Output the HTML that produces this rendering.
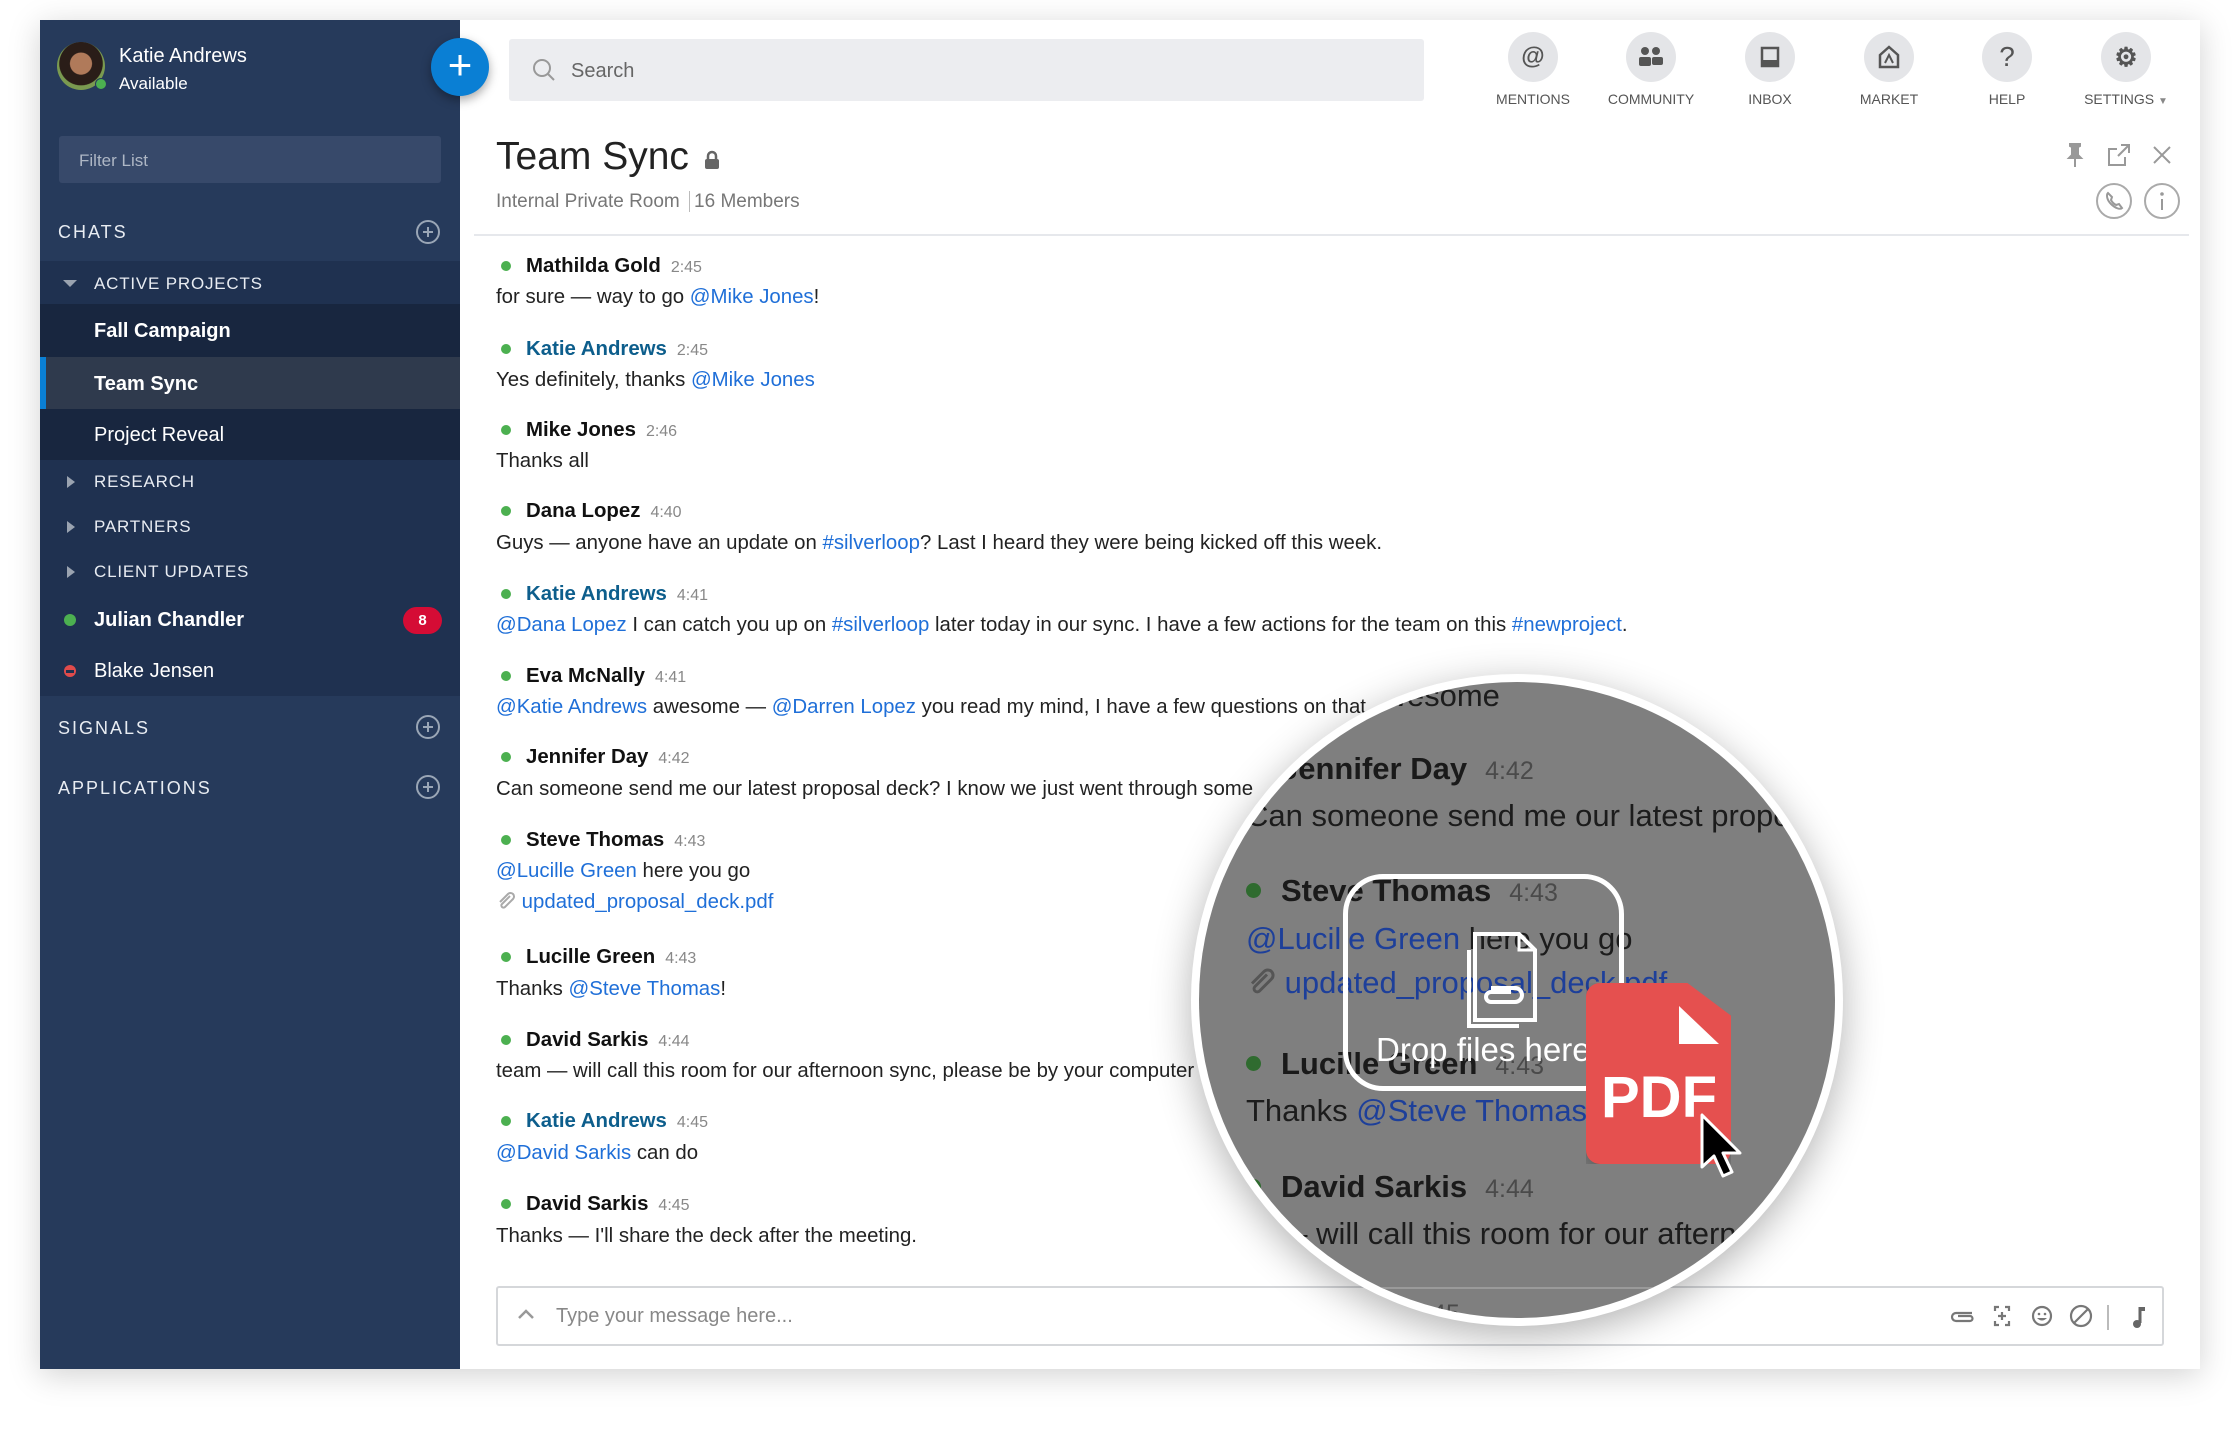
<!DOCTYPE html>
<html><head><meta charset="utf-8"><style>
*{margin:0;padding:0;box-sizing:border-box}
body{width:2240px;height:1430px;background:#fff;font-family:"Liberation Sans",sans-serif;position:relative;overflow:hidden}
.abs{position:absolute}
#frame{left:40px;top:20px;width:2160px;height:1349px;background:#fff;box-shadow:0 6px 30px rgba(0,0,0,.18)}
#side{left:40px;top:20px;width:420px;height:1349px;background:#263a5b}
.sb{color:#fff;white-space:nowrap}
.cap{font-size:18px;letter-spacing:2px;color:#e8ecf2}
.sub{font-size:17px;letter-spacing:.8px;color:#e8ecf2}
.item{font-size:20px;color:#fff}
.tri{width:0;height:0;border-top:6px solid transparent;border-bottom:6px solid transparent;border-left:8px solid #9aa3b0}
.plusc{width:24px;height:24px;border:2px solid #9aa6b6;border-radius:50%;}
.plusc:before{content:"";position:absolute;left:5px;top:9px;width:10px;height:2px;background:#9aa6b6}
.plusc:after{content:"";position:absolute;left:9px;top:5px;width:2px;height:10px;background:#9aa6b6}
.nav{width:50px;height:50px;border-radius:50%;background:#e4e5e8;display:flex;align-items:center;justify-content:center;color:#555;font-weight:bold;font-size:24px}
.navl{font-size:14px;color:#555;width:140px;text-align:center}
.m{left:496px;font-size:20.4px;color:#222;white-space:nowrap;line-height:31px}
.n{font-weight:bold;color:#111}
.n.k{color:#0d5e8c}
.t{font-size:16px;color:#888;font-weight:normal;margin-left:10px}
.dot{display:inline-block;width:10px;height:10px;border-radius:50%;background:#4cb050;margin:0 15px 2px 5px;vertical-align:middle}
.a{color:#1f6fd8}
.mg{left:0;font-size:31px;color:#1c1c1c;white-space:nowrap;line-height:40px}
.mg .a{color:#1d3f9a}
.mg .n{color:#1a1a1a}
.mg .t{font-size:25px;color:#4a4a4a;margin-left:18px}
.mg .dot{width:15px;height:15px;background:#2f6b2f;margin:0 20px 4px 0}
</style></head><body>
<div id="frame" class="abs"></div>
<div id="side" class="abs"></div>

<div class="abs" style="left:57px;top:42px;width:48px;height:48px;border-radius:50%;background:radial-gradient(circle at 50% 45%,#b07a5a 0 30%,#2a1d18 32% 60%,#7a9a50 62%)"></div>
<div class="abs" style="left:95px;top:78px;width:12px;height:12px;border-radius:50%;background:#4cb050;border:1px solid #263a5b"></div>
<div class="abs sb" style="left:119px;top:45px;font-size:20px">Katie Andrews</div>
<div class="abs sb" style="left:119px;top:74px;font-size:17px">Available</div>
<div class="abs" style="left:431px;top:38px;width:58px;height:58px;border-radius:50%;background:#0a7fd4;box-shadow:0 4px 10px rgba(0,0,0,.35);color:#fff;font-size:42px;line-height:54px;text-align:center">+</div>

<div class="abs" style="left:59px;top:136px;width:382px;height:47px;background:#37496a;border-radius:3px"></div>
<div class="abs sb" style="left:79px;top:151px;font-size:17px;color:#aeb7c5">Filter List</div>

<div class="abs sb cap" style="left:58px;top:222px">CHATS</div>
<div class="abs plusc" style="left:416px;top:220px"></div>

<div class="abs" style="left:40px;top:261px;width:420px;height:43px;background:#1f3150"></div>
<div class="abs" style="left:63px;top:280px;width:0;height:0;border-left:7px solid transparent;border-right:7px solid transparent;border-top:7px solid #9aa3b0"></div>
<div class="abs sb sub" style="left:94px;top:274px">ACTIVE PROJECTS</div>
<div class="abs" style="left:40px;top:304px;width:420px;height:53px;background:#18263f"></div>
<div class="abs sb item" style="left:94px;top:320px;font-weight:bold">Fall Campaign</div>
<div class="abs" style="left:40px;top:357px;width:420px;height:52px;background:#2f3a4d"></div>
<div class="abs" style="left:40px;top:357px;width:6px;height:52px;background:#0a7fd4"></div>
<div class="abs sb item" style="left:94px;top:373px;font-weight:bold">Team Sync</div>
<div class="abs" style="left:40px;top:409px;width:420px;height:51px;background:#18263f"></div>
<div class="abs sb item" style="left:94px;top:424px">Project Reveal</div>
<div class="abs" style="left:40px;top:460px;width:420px;height:236px;background:#1f3150"></div>
<div class="abs tri" style="left:67px;top:476px"></div>
<div class="abs sb sub" style="left:94px;top:472px">RESEARCH</div>
<div class="abs tri" style="left:67px;top:521px"></div>
<div class="abs sb sub" style="left:94px;top:517px">PARTNERS</div>
<div class="abs tri" style="left:67px;top:566px"></div>
<div class="abs sb sub" style="left:94px;top:562px">CLIENT UPDATES</div>
<div class="abs" style="left:64px;top:614px;width:12px;height:12px;border-radius:50%;background:#4cb050"></div>
<div class="abs sb item" style="left:94px;top:609px;font-weight:bold">Julian Chandler</div>
<div class="abs" style="left:403px;top:607px;width:39px;height:27px;border-radius:14px;background:#d50c35;color:#fff;font-size:15px;font-weight:bold;text-align:center;line-height:27px">8</div>
<div class="abs" style="left:64px;top:665px;width:12px;height:12px;border-radius:50%;background:#e04b4b"></div>
<div class="abs" style="left:66px;top:670px;width:8px;height:3px;background:#1f3150"></div>
<div class="abs sb item" style="left:94px;top:660px">Blake Jensen</div>
<div class="abs sb cap" style="left:58px;top:718px">SIGNALS</div>
<div class="abs plusc" style="left:416px;top:715px"></div>
<div class="abs sb cap" style="left:58px;top:778px">APPLICATIONS</div>
<div class="abs plusc" style="left:416px;top:775px"></div>

<div class="abs" style="left:509px;top:39px;width:915px;height:62px;background:#ecedf0;border-radius:3px"></div>
<svg class="abs" style="left:532px;top:58px" width="24" height="24" viewBox="0 0 24 24"><circle cx="10" cy="10" r="8" fill="none" stroke="#999" stroke-width="2"/><path d="M16 16l6 6" stroke="#999" stroke-width="2"/></svg>
<div class="abs" style="left:571px;top:60px;font-size:20px;color:#666">Search</div>

<div class="abs nav" style="left:1508px;top:32px">@</div>
<div class="abs nav" style="left:1626px;top:32px"><svg width="28" height="22" viewBox="0 0 28 22"><circle cx="8" cy="5" r="4" fill="#555"/><circle cx="19" cy="5" r="4" fill="#555"/><rect x="2" y="11" width="12" height="9" rx="2" fill="#555"/><rect x="15" y="11" width="11" height="8" rx="2" fill="#555"/></svg></div>
<div class="abs nav" style="left:1745px;top:32px"><svg width="22" height="22" viewBox="0 0 22 22"><path d="M3 2h16v18H3z" fill="none" stroke="#555" stroke-width="2.5"/><path d="M3 14h16v6H3z" fill="#555"/></svg></div>
<div class="abs nav" style="left:1864px;top:32px"><svg width="24" height="24" viewBox="0 0 24 24"><path d="M3 10L12 2l9 8v12H3z" fill="none" stroke="#555" stroke-width="2.5"/><path d="M8 18l4-8 4 8" fill="none" stroke="#555" stroke-width="2"/></svg></div>
<div class="abs nav" style="left:1982px;top:32px;font-weight:normal;font-size:28px">?</div>
<div class="abs nav" style="left:2101px;top:32px;font-size:26px">⚙</div>
<div class="abs navl" style="left:1463px;top:91px">MENTIONS</div>
<div class="abs navl" style="left:1581px;top:91px">COMMUNITY</div>
<div class="abs navl" style="left:1700px;top:91px">INBOX</div>
<div class="abs navl" style="left:1819px;top:91px">MARKET</div>
<div class="abs navl" style="left:1937px;top:91px">HELP</div>
<div class="abs navl" style="left:2056px;top:91px">SETTINGS <span style="font-size:10px;color:#888">▼</span></div>

<div class="abs" style="left:496px;top:135px;font-size:39px;color:#222">Team Sync</div>
<svg class="abs" style="left:704px;top:150px" width="16" height="20" viewBox="0 0 16 20"><path d="M4 9V6a4 4 0 018 0v3" fill="none" stroke="#666" stroke-width="2.5"/><rect x="1" y="9" width="14" height="10" rx="2" fill="#666"/></svg>
<div class="abs" style="left:496px;top:191px;font-size:19px;color:#777;white-space:nowrap">Internal Private Room <span style="border-left:1px solid #bbb;margin:0 4px;"></span> 16 Members</div>
<svg class="abs" style="left:2065px;top:142px" width="20" height="26" viewBox="0 0 20 26"><path d="M5 2h10v2l-2 1v8l3 3H4l3-3V5L5 4z M10 16v9" fill="#999" stroke="#999" stroke-width="2"/></svg>
<svg class="abs" style="left:2107px;top:143px" width="24" height="24" viewBox="0 0 24 24"><path d="M14 2h8v8M22 2L11 13M18 14v8H2V6h8" fill="none" stroke="#999" stroke-width="2"/></svg>
<svg class="abs" style="left:2152px;top:145px" width="20" height="20" viewBox="0 0 20 20"><path d="M2 2l16 16M18 2L2 18" stroke="#999" stroke-width="2"/></svg>
<svg class="abs" style="left:2095px;top:182px" width="38" height="38" viewBox="0 0 38 38"><circle cx="19" cy="19" r="17" fill="none" stroke="#aaa" stroke-width="2"/><path d="M13 11c-2 2-1 7 3 11s9 6 11 4l-3-4-3 1c-2-1-4-3-5-5l1-3z" fill="none" stroke="#999" stroke-width="2"/></svg>
<svg class="abs" style="left:2143px;top:182px" width="38" height="38" viewBox="0 0 38 38"><circle cx="19" cy="19" r="17" fill="none" stroke="#aaa" stroke-width="2"/><circle cx="19" cy="12" r="1.8" fill="#999"/><path d="M19 17v11" stroke="#999" stroke-width="2"/></svg>
<div class="abs" style="left:474px;top:234px;width:1715px;height:2px;background:#e6e8ec"></div>

<div class="abs m" style="top:251px"><span class="dot"></span><span class="n">Mathilda Gold</span><span class="t">2:45</span></div>
<div class="abs m" style="top:282px">for sure — way to go <span class="a">@Mike Jones</span>!</div>
<div class="abs m" style="top:334px"><span class="dot"></span><span class="n k">Katie Andrews</span><span class="t">2:45</span></div>
<div class="abs m" style="top:365px">Yes definitely, thanks <span class="a">@Mike Jones</span></div>
<div class="abs m" style="top:415px"><span class="dot"></span><span class="n">Mike Jones</span><span class="t">2:46</span></div>
<div class="abs m" style="top:446px">Thanks all</div>
<div class="abs m" style="top:496px"><span class="dot"></span><span class="n">Dana Lopez</span><span class="t">4:40</span></div>
<div class="abs m" style="top:528px">Guys — anyone have an update on <span class="a">#silverloop</span>? Last I heard they were being kicked off this week.</div>
<div class="abs m" style="top:579px"><span class="dot"></span><span class="n k">Katie Andrews</span><span class="t">4:41</span></div>
<div class="abs m" style="top:610px"><span class="a">@Dana Lopez</span> I can catch you up on <span class="a">#silverloop</span> later today in our sync. I have a few actions for the team on this <span class="a">#newproject</span>.</div>
<div class="abs m" style="top:661px"><span class="dot"></span><span class="n">Eva McNally</span><span class="t">4:41</span></div>
<div class="abs m" style="top:692px"><span class="a">@Katie Andrews</span> awesome — <span class="a">@Darren Lopez</span> you read my mind, I have a few questions on that</div>
<div class="abs m" style="top:742px"><span class="dot"></span><span class="n">Jennifer Day</span><span class="t">4:42</span></div>
<div class="abs m" style="top:774px">Can someone send me our latest proposal deck? I know we just went through some</div>
<div class="abs m" style="top:825px"><span class="dot"></span><span class="n">Steve Thomas</span><span class="t">4:43</span></div>
<div class="abs m" style="top:856px"><span class="a">@Lucille Green</span> here you go</div>
<div class="abs m" style="top:887px"><svg width="20" height="20" viewBox="0 0 20 20" style="vertical-align:-3px"><path d="M14 5l-8 8a2 2 0 003 3l8-8a3.5 3.5 0 00-5-5L4 11" fill="none" stroke="#aaa" stroke-width="2"/></svg> <span class="a">updated_proposal_deck.pdf</span></div>
<div class="abs m" style="top:942px"><span class="dot"></span><span class="n">Lucille Green</span><span class="t">4:43</span></div>
<div class="abs m" style="top:974px">Thanks <span class="a">@Steve Thomas</span>!</div>
<div class="abs m" style="top:1025px"><span class="dot"></span><span class="n">David Sarkis</span><span class="t">4:44</span></div>
<div class="abs m" style="top:1056px">team — will call this room for our afternoon sync, please be by your computer</div>
<div class="abs m" style="top:1106px"><span class="dot"></span><span class="n k">Katie Andrews</span><span class="t">4:45</span></div>
<div class="abs m" style="top:1138px"><span class="a">@David Sarkis</span> can do</div>
<div class="abs m" style="top:1189px"><span class="dot"></span><span class="n">David Sarkis</span><span class="t">4:45</span></div>
<div class="abs m" style="top:1221px">Thanks — I'll share the deck after the meeting.</div>

<div class="abs" style="left:496px;top:1286px;width:1668px;height:60px;border:2px solid #d5d7da;border-radius:3px;background:#fff"></div>
<svg class="abs" style="left:516px;top:1307px" width="20" height="14" viewBox="0 0 20 14"><path d="M3 11l7-7 7 7" fill="none" stroke="#999" stroke-width="2.5"/></svg>
<div class="abs" style="left:556px;top:1305px;font-size:20px;color:#888">Type your message here...</div>
<svg class="abs" style="left:1950px;top:1303px" width="200" height="28" viewBox="0 0 200 28">
 <path d="M22 10H6a4 4 0 000 8h14a2.5 2.5 0 000-5H8" fill="none" stroke="#777" stroke-width="2.2"/>
 <path d="M45 8V4h4M55 4h4v4M59 18v4h-4M49 22h-4v-4M52 9v8M48 13h8" fill="none" stroke="#777" stroke-width="2.2"/>
 <circle cx="92" cy="13" r="9" fill="none" stroke="#777" stroke-width="2.2"/><circle cx="89" cy="11" r="1.3" fill="#777"/><circle cx="95" cy="11" r="1.3" fill="#777"/><path d="M87 15q5 5 10 0" fill="#777"/>
 <circle cx="131" cy="13" r="10" fill="none" stroke="#777" stroke-width="2.2"/><path d="M124 20l14-14" stroke="#777" stroke-width="2.2"/>
 <path d="M158 2v25" stroke="#bbb" stroke-width="2"/>
 <path d="M190 4v16" stroke="#666" stroke-width="3"/><path d="M190 4h5v4h-5z" fill="#666"/><circle cx="187" cy="21" r="4" fill="#666"/>
</svg>

<div class="abs" style="left:1191px;top:674px;width:652px;height:652px;border-radius:50%;background:#fff;box-shadow:0 10px 40px rgba(0,0,0,.3)"></div>
<div class="abs" style="left:1199px;top:682px;width:636px;height:636px;border-radius:50%;background:#7f7f7f;overflow:hidden">
 <div class="abs" style="left:0;top:0;width:636px;height:636px">
  <div class="abs mg" style="left:-70px;top:-6px"><span class="a">@Katie Andrews</span> awesome</div>
  <div class="abs mg" style="left:82px;top:67px"><span class="n" style="font-weight:bold">Jennifer Day</span><span class="t">4:42</span></div>
  <div class="abs mg" style="left:47px;top:114px">Can someone send me our latest proposal</div>
  <div class="abs mg" style="left:47px;top:189px"><span class="dot"></span><span class="n" style="font-weight:bold">Steve Thomas</span><span class="t">4:43</span></div>
  <div class="abs mg" style="left:47px;top:237px"><span class="a">@Lucille Green</span> here you go</div>
  <div class="abs mg" style="left:47px;top:281px"><svg width="30" height="30" viewBox="0 0 20 20" style="vertical-align:-4px"><path d="M14 5l-8 8a2 2 0 003 3l8-8a3.5 3.5 0 00-5-5L4 11" fill="none" stroke="#555" stroke-width="2"/></svg> <span class="a">updated_proposal_deck.pdf</span></div>
  <div class="abs mg" style="left:47px;top:362px"><span class="dot"></span><span class="n" style="font-weight:bold">Lucille Green</span><span class="t">4:43</span></div>
  <div class="abs mg" style="left:47px;top:409px">Thanks <span class="a">@Steve Thomas</span>!</div>
  <div class="abs mg" style="left:47px;top:485px"><span class="dot"></span><span class="n" style="font-weight:bold">David Sarkis</span><span class="t">4:44</span></div>
  <div class="abs mg" style="left:0px;top:532px">team — will call this room for our afternoon</div>
  <div class="abs mg" style="left:-20px;top:610px"><span class="n k" style="font-weight:bold;color:#1d3f9a">Katie Andrews</span><span class="t">4:45</span></div>
  <div class="abs" style="left:-10px;top:605px;width:660px;height:2px;background:#9a9a9a"></div>
  <div class="abs" style="left:144px;top:192px;width:281px;height:217px;border:5px solid #fff;border-radius:40px"></div>
  <svg class="abs" style="left:262px;top:248px" width="80" height="100" viewBox="0 0 80 100"><path d="M8 20v76h50" fill="none" stroke="#fff" stroke-width="4"/><path d="M14 4h44l16 16v70H14z" fill="none" stroke="#fff" stroke-width="4"/><path d="M58 4v16h16" fill="none" stroke="#fff" stroke-width="3"/><path d="M30 58h24a7 7 0 010 14H30a5 5 0 010-10h20" fill="none" stroke="#fff" stroke-width="4"/></svg>
  <div class="abs" style="left:177px;top:349px;font-size:33px;color:#fff;white-space:nowrap">Drop files here</div>
  <div class="abs" style="left:387px;top:301px;width:145px;height:181px;background:#e5504f;border-radius:14px;clip-path:polygon(0 0,70% 0,100% 18%,100% 100%,0 100%);box-shadow:0 8px 20px rgba(0,0,0,.3)"></div>
  <svg class="abs" style="left:470px;top:322px" width="60" height="60" viewBox="0 0 60 60"><path d="M10 2L50 40H10z" fill="#fff"/></svg>
  <div class="abs" style="left:402px;top:382px;font-size:58px;font-weight:bold;color:#fff">PDF</div>
  <svg class="abs" style="left:500px;top:430px" width="50" height="70" viewBox="0 0 50 70"><path d="M3 3v52l12-11 9 20 9-4-9-19h17z" fill="#000" stroke="#fff" stroke-width="3" stroke-linejoin="round"/></svg>
 </div>
</div>
</body></html>
